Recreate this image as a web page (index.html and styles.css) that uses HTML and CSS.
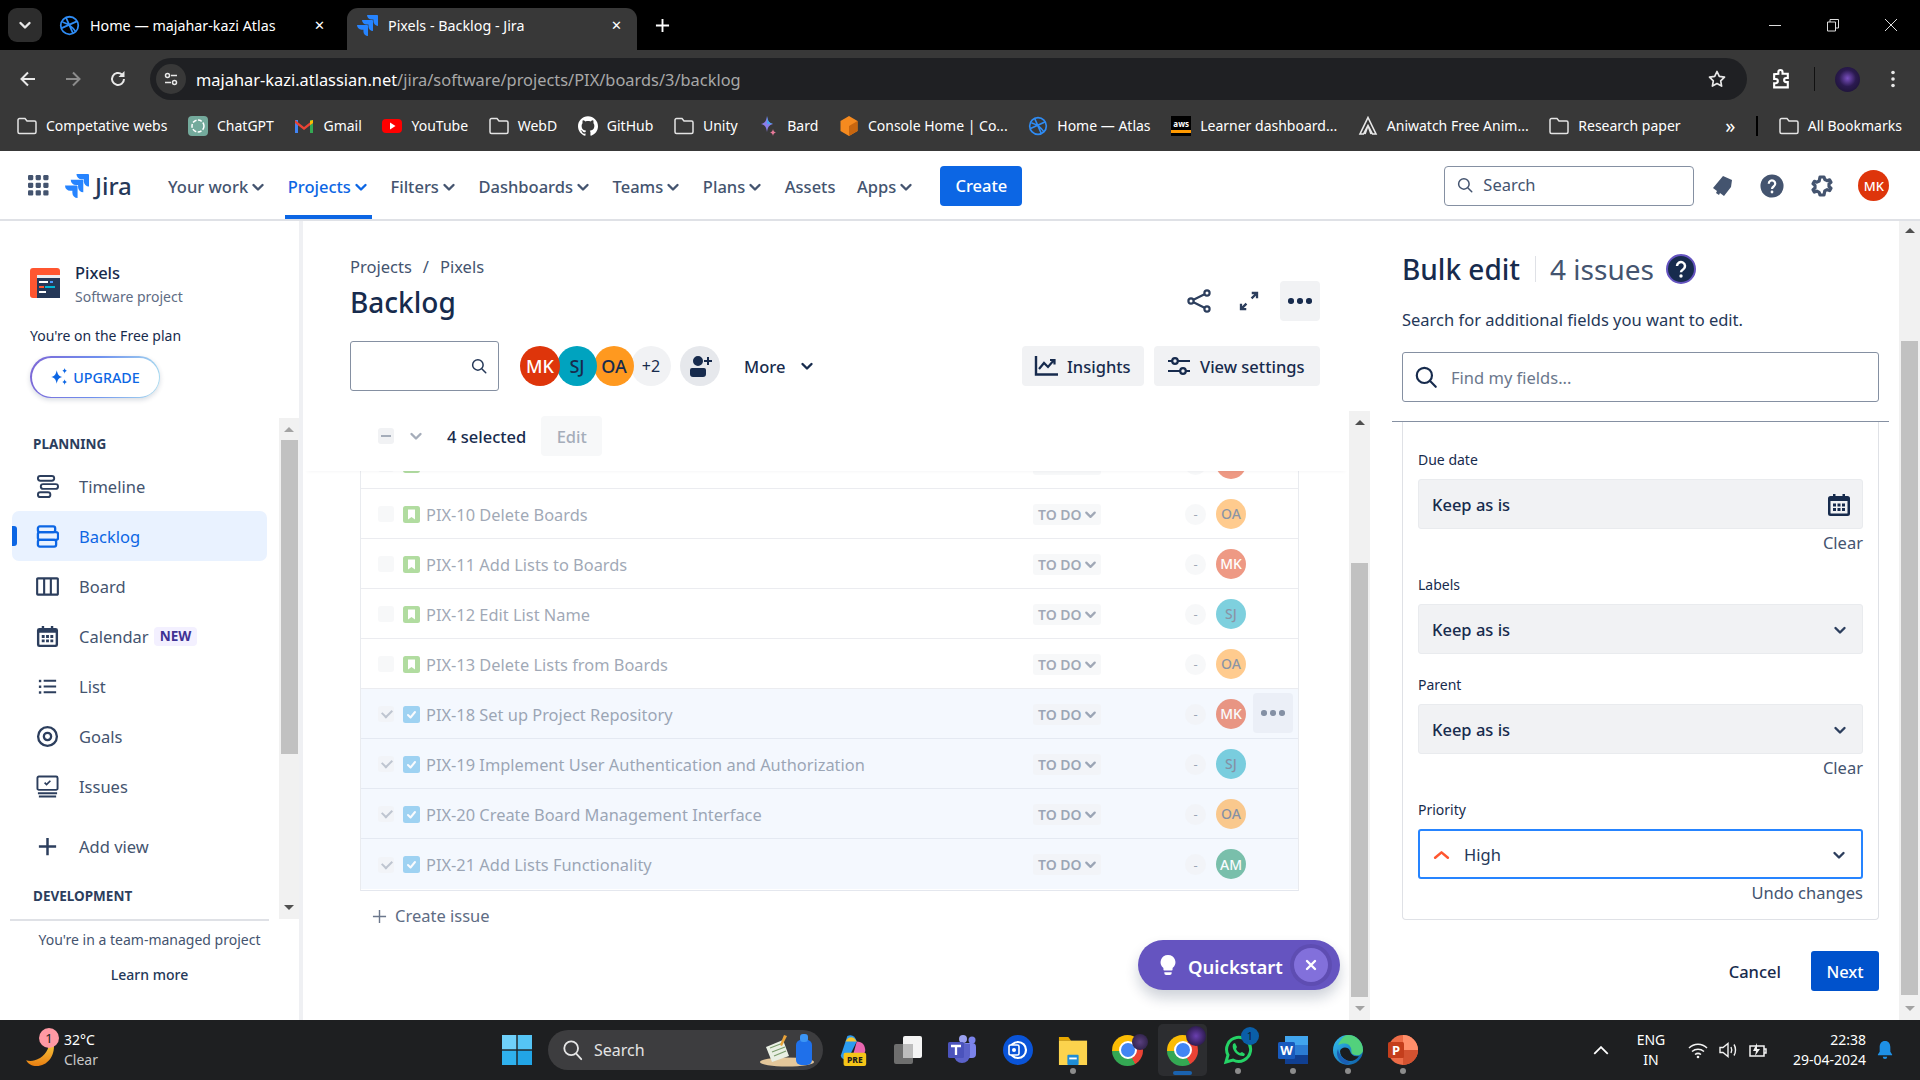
FILE: index.html
```html
<!DOCTYPE html>
<html lang="en">
<head>
<meta charset="utf-8">
<title>Pixels - Backlog - Jira</title>
<link rel="stylesheet" href="styles.css">
</head>
<body>
<svg class="defs" aria-hidden="true">
  <symbol id="jira" viewBox="0 0 24 24"><path fill="#2684ff" d="M11.571 11.513H0a5.218 5.218 0 0 0 5.232 5.215h2.13v2.057A5.215 5.215 0 0 0 12.575 24V12.518a1.005 1.005 0 0 0-1.005-1.005zm5.723-5.756H5.736a5.215 5.215 0 0 0 5.215 5.214h2.129v2.058a5.218 5.218 0 0 0 5.215 5.214V6.758a1.001 1.001 0 0 0-1.001-1.001zM23.013 0H11.455a5.215 5.215 0 0 0 5.215 5.215h2.129v2.057A5.215 5.215 0 0 0 24 12.483V1.005A1.001 1.001 0 0 0 23.013 0z"/></symbol>
  <symbol id="atlas" viewBox="0 0 24 24"><g fill="none" stroke="#2f8cf4" stroke-width="2"><circle cx="12" cy="12" r="10"/><path d="M3 15 21 7M8 3l8 18M4 8c6 2 12 6 15 11"/></g></symbol>
  <symbol id="folder" viewBox="0 0 20 18"><path fill="none" stroke="#e4e4e4" stroke-width="1.5" d="M2.5 1.5H8l2 2.5h7.5a1.5 1.5 0 0 1 1.5 1.5v9.5a1.5 1.5 0 0 1-1.5 1.5h-15A1.5 1.5 0 0 1 1 15V3a1.5 1.5 0 0 1 1.5-1.5z"/></symbol>
  <symbol id="chev" viewBox="0 0 16 16"><path fill="none" stroke="currentColor" stroke-width="2.4" stroke-linecap="round" stroke-linejoin="round" d="M3.5 6 8 10.5 12.5 6"/></symbol>
  <symbol id="search" viewBox="0 0 24 24"><path fill="none" stroke="currentColor" stroke-width="2" stroke-linecap="round" d="M10.5 3.5a7 7 0 1 1 0 14 7 7 0 0 1 0-14zM16 16l5 5"/></symbol>
  <symbol id="cal" viewBox="0 0 24 24"><path fill="currentColor" fill-rule="evenodd" d="M3.5 3H6V1h2.500v2h7V1H18v2h2.500A2.500 2.500 0 0 1 23 5.500v15a2.500 2.500 0 0 1-2.500 2.500h-17A2.500 2.500 0 0 1 1 20.500v-15A2.500 2.500 0 0 1 3.500 3zM3.500 8v12a.5.5 0 0 0 .5.5h16a.5.5 0 0 0 .5-.5V8zM6 10.500h3v3H6zm4.500 0h3v3h-3zm4.500 0h3v3h-3zM6 15h3v3H6zm4.500 0h3v3h-3zm4.500 0h3v3h-3z"/></symbol>
  <symbol id="story" viewBox="0 0 17 17"><rect width="17" height="17" rx="2.500" fill="#65ba43"/><path fill="#fff" d="M5 3.500h7v10L8.500 11 5 13.500z"/></symbol>
  <symbol id="task" viewBox="0 0 17 17"><rect width="17" height="17" rx="2.500" fill="#4bade8"/><path fill="none" stroke="#fff" stroke-width="2" stroke-linecap="round" stroke-linejoin="round" d="m5 9 2.500 2.500L12 6"/></symbol>
  <symbol id="tbfolder" viewBox="0 0 32 34"><path fill="#e8a800" d="M1 3h10l3 4H1z"/><rect x="1" y="7" width="30" height="26" fill="#fcd34d"/><rect x="10" y="22" width="12" height="11" rx="1" fill="#1f8dd6"/><rect x="12" y="25" width="8" height="2" fill="#fff"/></symbol>
</svg>

<div class="tabstrip">
  <span class="tab-menu"><svg class="i16"><use href="#chev"/></svg></span>
  <div class="tab">
    <svg class="fav"><use href="#atlas"/></svg>
    <span class="tab-title">Home — majahar-kazi Atlas</span>
    <span class="tab-x">✕</span>
  </div>
  <div class="tab tab-on">
    <svg class="fav"><use href="#jira"/></svg>
    <span class="tab-title">Pixels - Backlog - Jira</span>
    <span class="tab-x">✕</span>
  </div>
  <svg class="tab-plus" viewBox="0 0 16 16"><path stroke="#fff" stroke-width="2" d="M8 1v14M1 8h14"/></svg>
  <div class="winbtns">
    <svg viewBox="0 0 14 14"><path stroke="#ddd" d="M1 7.500h12"/></svg>
    <svg viewBox="0 0 14 14"><path fill="none" stroke="#ddd" d="M1.500 4h8v9h-8zM4 4V1.500h8.500V10H9.500"/></svg>
    <svg viewBox="0 0 14 14"><path stroke="#ddd" d="m1 1 12 12M13 1 1 13"/></svg>
  </div>
</div>

<div class="toolbar">
  <svg class="tb-btn" viewBox="0 0 20 20"><path fill="none" stroke="#e8e8e8" stroke-width="2" d="M17 10H4m6-6.500L3.500 10l6.500 6.500"/></svg>
  <svg class="tb-btn" viewBox="0 0 20 20"><path fill="none" stroke="#8c8c8c" stroke-width="2" d="M3 10h13M10 3.500l6.500 6.500-6.500 6.500"/></svg>
  <svg class="tb-btn" viewBox="0 0 20 20"><path fill="none" stroke="#e8e8e8" stroke-width="2" d="M16 10a6 6 0 1 1-2-4.500"/><path fill="#e8e8e8" d="M16.500 2v6h-6z"/></svg>
  <div class="omni">
    <span class="tune"><svg viewBox="0 0 16 16"><g fill="none" stroke="#e8e8e8" stroke-width="1.500"><circle cx="4.500" cy="4.500" r="2"/><circle cx="11.500" cy="11.500" r="2"/><path d="M8 4.500h6M2 11.500h6"/></g></svg></span>
    <span class="url"><b>majahar-kazi.atlassian.net</b>/jira/software/projects/PIX/boards/3/backlog</span>
    <svg class="star" viewBox="0 0 20 20"><path fill="none" stroke="#e8e8e8" stroke-width="1.700" stroke-linejoin="round" d="m10 2.500 2.300 4.900 5.200.7-3.800 3.700.9 5.300-4.600-2.600-4.600 2.600.9-5.300L2.500 8.100l5.200-.7z"/></svg>
  </div>
  <svg class="ext" viewBox="0 0 20 20"><path fill="none" stroke="#fff" stroke-width="2" d="M7 4.500V3a2 2 0 0 1 4 0v1.500h5v4h-1.500a2 2 0 0 0 0 4H16v5H3v-4h1.500a2 2 0 0 0 0-4H3v-4.500z"/></svg>
  <span class="tb-sep"></span>
  <span class="profile"></span>
  <svg class="dots" viewBox="0 0 6 20"><g fill="#e8e8e8"><circle cx="3" cy="3.500" r="1.800"/><circle cx="3" cy="10" r="1.800"/><circle cx="3" cy="16.500" r="1.800"/></g></svg>
</div>

<div class="bookmarks">
  <span class="bm"><svg class="bm-i"><use href="#folder"/></svg>Competative webs</span>
  <span class="bm"><svg class="bm-i" viewBox="0 0 20 20"><rect width="20" height="20" rx="4" fill="#74aa9c"/><circle cx="10" cy="10" r="6" fill="none" stroke="#fff" stroke-width="1.500" stroke-dasharray="4 1.500"/></svg>ChatGPT</span>
  <span class="bm"><svg class="bm-i" viewBox="0 0 20 20"><path fill="#4285f4" d="M1 4h3v13H1z"/><path fill="#34a853" d="M16 4h3v13h-3z"/><path fill="#ea4335" d="M1 4l9 7 9-7v3l-9 7-9-7z"/><path fill="#fbbc04" d="M16 5l3-1v3l-3 2z"/></svg>Gmail</span>
  <span class="bm"><svg class="bm-i" viewBox="0 0 20 20"><rect y="3" width="20" height="14" rx="4" fill="#f00"/><path fill="#fff" d="m8 6.500 5.500 3.500L8 13.500z"/></svg>YouTube</span>
  <span class="bm"><svg class="bm-i"><use href="#folder"/></svg>WebD</span>
  <span class="bm"><svg class="bm-i" viewBox="0 0 24 24"><path fill="#fff" d="M12 .297c-6.630 0-12 5.373-12 12 0 5.303 3.438 9.800 8.205 11.385.6.113.82-.258.82-.577 0-.285-.01-1.040-.015-2.040-3.338.724-4.042-1.610-4.042-1.610C4.422 18.070 3.633 17.700 3.633 17.700c-1.087-.744.084-.729.084-.729 1.205.084 1.838 1.236 1.838 1.236 1.070 1.835 2.809 1.305 3.495.998.108-.776.417-1.305.760-1.605-2.665-.3-5.466-1.332-5.466-5.930 0-1.310.465-2.380 1.235-3.220-.135-.303-.54-1.523.105-3.176 0 0 1.005-.322 3.300 1.230.96-.267 1.980-.399 3-.405 1.020.006 2.040.138 3 .405 2.280-1.552 3.285-1.230 3.285-1.230.645 1.653.24 2.873.12 3.176.765.840 1.230 1.910 1.230 3.220 0 4.610-2.805 5.625-5.475 5.920.42.360.81 1.096.81 2.220 0 1.606-.015 2.896-.015 3.286 0 .315.21.69.825.57C20.565 22.092 24 17.592 24 12.297c0-6.627-5.373-12-12-12"/></svg>GitHub</span>
  <span class="bm"><svg class="bm-i"><use href="#folder"/></svg>Unity</span>
  <span class="bm"><svg class="bm-i" viewBox="0 0 20 20"><path fill="#8a7ee8" d="M9 0c.8 5 2 7 6 8-4 1-5.200 3-6 8-.8-5-2-7-6-8 4-1 5.200-3 6-8z"/><path fill="#4aa3f0" d="M9 0c.8 5 2 7 6 8H9z"/><path fill="#e87a9a" d="M15 13c.3 2 1 3 3 3.500-2 .5-2.700 1.500-3 3.500-.3-2-1-3-3-3.500 2-.5 2.700-1.500 3-3.500z"/></svg>Bard</span>
  <span class="bm"><svg class="bm-i" viewBox="0 0 20 20"><path fill="#f58a1f" d="m10 0 8.500 5v10L10 20l-8.500-5V5z"/><path fill="#c8660f" d="M10 10v10l8.500-5V5z"/></svg>Console Home | Co...</span>
  <span class="bm"><svg class="bm-i"><use href="#atlas"/></svg>Home — Atlas</span>
  <span class="bm"><span class="aws">aws</span>Learner dashboard...</span>
  <span class="bm"><svg class="bm-i" viewBox="0 0 20 20"><path fill="none" stroke="#e8e8e8" stroke-width="1.600" d="M10 1.500 18 18h-3.500L10 9.500 5.500 18H2zM10 9.500 7 18M10 9.500l3 8.500"/></svg>Aniwatch Free Anim...</span>
  <span class="bm"><svg class="bm-i"><use href="#folder"/></svg>Research paper</span>
  <span class="bm-more">»</span>
  <span class="bm-sep"></span>
  <span class="bm"><svg class="bm-i"><use href="#folder"/></svg>All Bookmarks</span>
</div>

<header class="topnav">
  <svg class="apps" viewBox="0 0 22 22"><g fill="#44546f"><rect x="0" y="0" width="5.500" height="5.500" rx="1.200"/><rect x="8" y="0" width="5.500" height="5.500" rx="1.200"/><rect x="16" y="0" width="5.500" height="5.500" rx="1.200"/><rect x="0" y="8" width="5.500" height="5.500" rx="1.200"/><rect x="8" y="8" width="5.500" height="5.500" rx="1.200"/><rect x="16" y="8" width="5.500" height="5.500" rx="1.200"/><rect x="0" y="16" width="5.500" height="5.500" rx="1.200"/><rect x="8" y="16" width="5.500" height="5.500" rx="1.200"/><rect x="16" y="16" width="5.500" height="5.500" rx="1.200"/></g></svg>
  <svg class="jira-mark"><use href="#jira"/></svg>
  <span class="jira-word">Jira</span>
  <nav class="mainnav">
    <a class="nav-i">Your work<svg class="nav-c"><use href="#chev"/></svg></a>
    <a class="nav-i nav-on">Projects<svg class="nav-c"><use href="#chev"/></svg></a>
    <a class="nav-i">Filters<svg class="nav-c"><use href="#chev"/></svg></a>
    <a class="nav-i">Dashboards<svg class="nav-c"><use href="#chev"/></svg></a>
    <a class="nav-i">Teams<svg class="nav-c"><use href="#chev"/></svg></a>
    <a class="nav-i">Plans<svg class="nav-c"><use href="#chev"/></svg></a>
    <a class="nav-i">Assets</a>
    <a class="nav-i">Apps<svg class="nav-c"><use href="#chev"/></svg></a>
  </nav>
  <button class="create">Create</button>
  <div class="nav-search"><svg class="i18"><use href="#search"/></svg><span>Search</span></div>
  <svg class="nav-ic bell" viewBox="0 0 24 24"><path fill="#44546f" d="M13 2 22 6l-1 7-7 9-4-3-1 2-3-2 1-2-4-3z"/></svg>
  <svg class="nav-ic help" viewBox="0 0 26 26"><circle cx="13" cy="13" r="12.500" fill="#44546f"/><path fill="none" stroke="#fff" stroke-width="2.400" d="M9.500 10.500a3.500 3.500 0 1 1 5.500 2.800c-1.200.8-2 1.500-2 3"/><circle cx="13" cy="19.500" r="1.500" fill="#fff"/></svg>
  <svg class="nav-ic gear" viewBox="0 0 24 24"><path fill="none" stroke="#44546f" stroke-width="3.200" stroke-linejoin="round" d="M12 3l2 0 .8 2.500 2.300 1.200 2.500-.9 1.400 2.400-2 1.700v2.600l2 1.700-1.400 2.400-2.500-.9-2.300 1.200L14 21h-4l-.8-2.600-2.300-1.200-2.500.9-1.400-2.400 2-1.700v-2.600l-2-1.700 1.400-2.400 2.500.9 2.300-1.200L10 3z"/></svg>
  <span class="ava ava-nav">MK</span>
</header>

<div class="page">
  <aside class="side">
    <div class="proj">
      <svg class="proj-ic" viewBox="0 0 30 30"><rect width="30" height="30" rx="3" fill="#ff5630"/><rect x="7" y="7" width="23" height="23" fill="#253858"/><rect x="7" y="7" width="23" height="3" fill="#ebecf0"/><rect x="9" y="13" width="9" height="2" fill="#fff"/><rect x="20" y="13" width="3" height="2" fill="#4c9aff"/><rect x="9" y="18" width="5" height="2" fill="#ff5630"/><rect x="15" y="18" width="10" height="2" fill="#00b8d9"/><rect x="9" y="23" width="7" height="2" fill="#fff"/></svg>
      <div class="proj-t"><strong>Pixels</strong><span>Software project</span></div>
    </div>
    <p class="plan">You're on the Free plan</p>
    <div class="upg-wrap"><span class="upgrade"><svg viewBox="0 0 16 16"><path fill="#0c66e4" d="M6 2c.8 4 2 5.200 5 6-3 .8-4.200 2-5 6-.8-4-2-5.200-5-6 3-.8 4.200-2 5-6zM13 0c.3 1.500.8 2 2 2.500-1.200.5-1.700 1-2 2.500-.3-1.500-.8-2-2-2.500 1.200-.5 1.700-1 2-2.500zM13 10c.3 1.500.8 2 2 2.500-1.200.5-1.700 1-2 2.500-.3-1.500-.8-2-2-2.500 1.200-.5 1.700-1 2-2.500z"/></svg>UPGRADE</span></div>
    <div class="side-scroll">
      <div class="side-nav">
        <h4>PLANNING</h4>
        <a class="sn"><svg viewBox="0 0 24 24"><g fill="none" stroke="#2c3e5d" stroke-width="2"><rect x="2" y="1" width="17" height="5" rx="2.500"/><rect x="5" y="9.500" width="18" height="5" rx="2.500"/><rect x="2" y="18" width="13" height="5" rx="2.500"/></g></svg>Timeline</a>
        <a class="sn sn-on"><svg viewBox="0 0 24 24"><g fill="none" stroke="#0c66e4" stroke-width="2.400"><rect x="2" y="1.500" width="18" height="6" rx="2"/><rect x="2" y="7.500" width="21" height="8" rx="2"/><rect x="2" y="15.500" width="19" height="7" rx="2"/></g></svg>Backlog</a>
        <a class="sn"><svg viewBox="0 0 24 24"><path fill="none" stroke="#2c3e5d" stroke-width="2.200" d="M2 3.500h20a.8.8 0 0 1 .8.8v15.400a.8.8 0 0 1-.8.8H2a.8.8 0 0 1-.8-.8V4.300a.8.800 0 0 1 .8-.8zM8.500 3.500v17M15.500 3.500v17"/></svg>Board</a>
        <a class="sn"><svg class="sn-cal"><use href="#cal"/></svg>Calendar<em>NEW</em></a>
        <a class="sn"><svg viewBox="0 0 24 24"><path fill="none" stroke="#2c3e5d" stroke-width="2.200" d="M8 6h13M8 12h13M8 18h13"/><g fill="#2c3e5d"><rect x="3" y="5" width="2.500" height="2.500"/><rect x="3" y="11" width="2.500" height="2.500"/><rect x="3" y="17" width="2.500" height="2.500"/></g></svg>List</a>
        <a class="sn"><svg viewBox="0 0 24 24"><g fill="none" stroke="#2c3e5d" stroke-width="2.400"><circle cx="12" cy="12" r="9.800"/><circle cx="12" cy="12" r="3.800"/></g></svg>Goals</a>
        <a class="sn"><svg viewBox="0 0 24 24"><path fill="none" stroke="#2c3e5d" stroke-width="2" d="M3 1.500h18a1.500 1.500 0 0 1 1.500 1.500v11a1.500 1.500 0 0 1-1.500 1.500H3A1.500 1.500 0 0 1 1.500 14V3A1.500 1.500 0 0 1 3 1.500zM2 19h20M3 22.500h18"/><path fill="none" stroke="#2c3e5d" stroke-width="1.800" d="m9 8 2 2 4-4"/></svg>Issues</a>
        <a class="sn sn-add"><svg viewBox="0 0 24 24"><path stroke="#2c3e5d" stroke-width="2.600" d="M12 3v18M3 12h18"/></svg>Add view</a>
        <h4 class="h-dev">DEVELOPMENT</h4>
      </div>
      <div class="sb sb-side"><i class="ar-up"></i><b></b><i class="ar-dn"></i></div>
    </div>
    <div class="side-foot"><span>You're in a team-managed project</span><a>Learn more</a></div>
  </aside>

  <main class="main">
    <div class="main-head">
      <div class="crumbs"><span>Projects</span><span class="slash">/</span><span>Pixels</span></div>
      <div class="title-row">
        <h1>Backlog</h1>
        <div class="title-acts">
          <svg class="act" viewBox="0 0 24 24"><g fill="none" stroke="#2c3e5d" stroke-width="2.200"><circle cx="4" cy="12" r="2.600"/><circle cx="20" cy="4" r="2.600"/><circle cx="20" cy="20" r="2.600"/><path d="M6.500 10.800 17.500 5.200M6.500 13.200l11 5.600"/></g></svg>
          <svg class="act act2" viewBox="0 0 24 24"><path fill="#2c3e5d" d="M15 2h7v7h-2.500V6.300l-3.800 3.800-1.800-1.800 3.800-3.800H15zM9 22H2v-7h2.500v2.700l3.800-3.800 1.800 1.800-3.800 3.800H9z"/></svg>
          <span class="more-btn"><i></i><i></i><i></i></span>
        </div>
      </div>
      <div class="filters">
        <div class="fsearch"><svg class="i18"><use href="#search"/></svg></div>
        <div class="avs">
          <span class="ava a40 c-mk">MK</span><span class="ava a40 c-sj">SJ</span><span class="ava a40 c-oa">OA</span><span class="ava a40 c-plus">+2</span>
        </div>
        <span class="addp"><svg viewBox="0 0 24 24"><path fill="#172b4d" d="M10 2a5 5 0 1 1 0 10 5 5 0 0 1 0-10zM4 14h12a2 2 0 0 1 2 2v4a3 3 0 0 1-3 3H5a3 3 0 0 1-3-3v-4a2 2 0 0 1 2-2zM19 3h2v3h3v2h-3v3h-2V8h-3V6h3z"/></svg></span>
        <span class="morefl">More<svg><use href="#chev"/></svg></span>
        <span class="btn btn-ins"><svg viewBox="0 0 24 24"><path fill="none" stroke="#172b4d" stroke-width="2.400" d="M2 2v18.500h22"/><path fill="none" stroke="#172b4d" stroke-width="2.200" d="m5 15 5-6 4 4 6-7m-4 0h4.500v4.500"/></svg>Insights</span>
        <span class="btn btn-view"><svg viewBox="0 0 24 24"><g fill="none" stroke="#172b4d" stroke-width="2.200"><path d="M1 7h4M11 7h12M1 17h12M19 17h4"/><circle cx="8" cy="7" r="2.800"/><circle cx="16" cy="17" r="2.800"/></g></svg>View settings</span>
      </div>
    </div>
    <div class="main-body">
      <div class="list-col">
        <div class="bulkbar">
          <span class="bulk-cb"></span>
          <svg class="bulk-c"><use href="#chev"/></svg>
          <strong>4 selected</strong>
          <span class="edit">Edit</span>
        </div>
        <div class="list">
          <div class="row row-cut"><div class="cells"><span class="cb"></span><svg class="ti"><use href="#story"/></svg><span class="txt"></span><span class="loz"></span><span class="dash"></span><span class="ava a30 c-mk"></span></div></div>
          <div class="row"><div class="cells"><span class="cb"></span><svg class="ti"><use href="#story"/></svg><span class="txt">PIX-10 Delete Boards</span><span class="loz">TO DO<svg><use href="#chev"/></svg></span><span class="dash">-</span><span class="ava a30 c-oa">OA</span></div></div>
          <div class="row"><div class="cells"><span class="cb"></span><svg class="ti"><use href="#story"/></svg><span class="txt">PIX-11 Add Lists to Boards</span><span class="loz">TO DO<svg><use href="#chev"/></svg></span><span class="dash">-</span><span class="ava a30 c-mk">MK</span></div></div>
          <div class="row"><div class="cells"><span class="cb"></span><svg class="ti"><use href="#story"/></svg><span class="txt">PIX-12 Edit List Name</span><span class="loz">TO DO<svg><use href="#chev"/></svg></span><span class="dash">-</span><span class="ava a30 c-sj">SJ</span></div></div>
          <div class="row"><div class="cells"><span class="cb"></span><svg class="ti"><use href="#story"/></svg><span class="txt">PIX-13 Delete Lists from Boards</span><span class="loz">TO DO<svg><use href="#chev"/></svg></span><span class="dash">-</span><span class="ava a30 c-oa">OA</span></div></div>
          <div class="row row-sel"><div class="cells"><span class="cb cb-on"></span><svg class="ti"><use href="#task"/></svg><span class="txt">PIX-18 Set up Project Repository</span><span class="loz">TO DO<svg><use href="#chev"/></svg></span><span class="dash">-</span><span class="ava a30 c-mk">MK</span><span class="row-more"><i></i><i></i><i></i></span></div></div>
          <div class="row row-sel"><div class="cells"><span class="cb cb-on"></span><svg class="ti"><use href="#task"/></svg><span class="txt">PIX-19 Implement User Authentication and Authorization</span><span class="loz">TO DO<svg><use href="#chev"/></svg></span><span class="dash">-</span><span class="ava a30 c-sj">SJ</span></div></div>
          <div class="row row-sel"><div class="cells"><span class="cb cb-on"></span><svg class="ti"><use href="#task"/></svg><span class="txt">PIX-20 Create Board Management Interface</span><span class="loz">TO DO<svg><use href="#chev"/></svg></span><span class="dash">-</span><span class="ava a30 c-oa">OA</span></div></div>
          <div class="row row-sel"><div class="cells"><span class="cb cb-on"></span><svg class="ti"><use href="#task"/></svg><span class="txt">PIX-21 Add Lists Functionality</span><span class="loz">TO DO<svg><use href="#chev"/></svg></span><span class="dash">-</span><span class="ava a30 c-am">AM</span></div></div>
        </div>
        <div class="create-issue"><svg viewBox="0 0 16 16"><path stroke="#6b778c" stroke-width="1.500" d="M8 1v14M1 8h14"/></svg>Create issue</div>
        <div class="quick">
          <svg viewBox="0 0 18 24"><path fill="#fff" d="M9 1a8 8 0 0 1 5 14.300V17a1 1 0 0 1-1 1H5a1 1 0 0 1-1-1v-1.700A8 8 0 0 1 9 1zM5 20h8v1a2 2 0 0 1-2 2H7a2 2 0 0 1-2-2z"/></svg>
          <span>Quickstart</span>
          <span class="q-x"><svg viewBox="0 0 12 12"><path stroke="#fff" stroke-width="2.400" stroke-linecap="round" d="m2 2 8 8M10 2l-8 8"/></svg></span>
        </div>
      </div>
      <div class="sb sb-main"><i class="ar-up"></i><b></b><i class="ar-dn"></i></div>
    </div>
  </main>

  <section class="panel">
    <div class="p-head">
      <h2>Bulk edit</h2><span class="p-div"></span><span class="p-count">4 issues</span>
      <svg class="p-help" viewBox="0 0 30 30"><circle cx="15" cy="15" r="14" fill="#172b4d" stroke="#6554c0" stroke-width="2"/><path fill="none" stroke="#fff" stroke-width="2.500" d="M11 12a4 4 0 1 1 6.300 3.300c-1.500 1-2.300 1.700-2.300 3"/><circle cx="15" cy="22" r="1.700" fill="#fff"/></svg>
    </div>
    <p class="p-desc">Search for additional fields you want to edit.</p>
    <div class="find"><svg><use href="#search"/></svg><span>Find my fields...</span></div>
    <div class="p-line"></div>
    <div class="fields">
      <div class="f-clip"><span>Clear</span></div>
      <label class="f-lab f-first">Due date</label>
      <div class="inp"><span>Keep as is</span><svg class="inp-cal"><use href="#cal"/></svg></div>
      <a class="f-link">Clear</a>
      <label class="f-lab f-b">Labels</label>
      <div class="inp"><span>Keep as is</span><svg class="inp-c"><use href="#chev"/></svg></div>
      <label class="f-lab f-c">Parent</label>
      <div class="inp"><span>Keep as is</span><svg class="inp-c"><use href="#chev"/></svg></div>
      <a class="f-link">Clear</a>
      <label class="f-lab f-b">Priority</label>
      <div class="inp inp-focus"><svg class="prio" viewBox="0 0 16 10"><path fill="none" stroke="#ff5630" stroke-width="2.400" stroke-linecap="round" stroke-linejoin="round" d="M2 8 8 3l6 5"/></svg><span>High</span><svg class="inp-c"><use href="#chev"/></svg></div>
      <a class="f-link">Undo changes</a>
    </div>
    <div class="p-acts"><span class="cancel">Cancel</span><span class="next">Next</span></div>
  </section>
  <div class="sb sb-outer"><i class="ar-up"></i><b></b><i class="ar-dn"></i></div>
</div>

<footer class="taskbar">
  <div class="weather">
    <span class="w-ic"><svg class="w-moon" viewBox="0 0 30 24"><defs><linearGradient id="moon" x1="0" y1="0" x2="0" y2="1"><stop offset="0" stop-color="#f7c63c"/><stop offset="1" stop-color="#e97f12"/></linearGradient></defs><path fill="url(#moon)" d="M29 0c1 13-7 23-18 23-5 0-9-2-11-6 3 1 6 1 9 0 8-2 14-9 15-17z"/></svg><span class="w-badge">1</span></span>
    <div class="w-t"><span>32°C</span><span class="w-s">Clear</span></div>
  </div>
  <svg class="win" viewBox="0 0 30 30"><g fill="#4fc3f7"><rect width="14.300" height="14.300" fill="#6fd0fa"/><rect x="15.700" width="14.300" height="14.300" fill="#55c4f5"/><rect y="15.700" width="14.300" height="14.300" fill="#2fb1ee"/><rect x="15.700" y="15.700" width="14.300" height="14.300" fill="#22a5e6"/></g></svg>
  <div class="t-search">
    <svg viewBox="0 0 24 24"><path fill="none" stroke="#e6e6e6" stroke-width="2" stroke-linecap="round" d="M10 2.500a7.500 7.500 0 1 1 0 15 7.500 7.500 0 0 1 0-15zM15.500 16 21 22"/></svg>
    <span>Search</span>
    <svg class="t-art" viewBox="0 0 56 34"><ellipse cx="27" cy="29" rx="27" ry="4.500" fill="#e4c79a"/><path fill="#e9efe3" d="m6 14 17-7 6 16-17 6z"/><path stroke="#7b9c6d" stroke-width="1.200" d="m10 15 13-5M12 19l13-5M14 23l12-5"/><path fill="#e8a23a" d="m24 2 3 1-5 10-2-1z"/><rect x="36" y="7" width="16" height="25" rx="5" fill="#1f70ea"/><rect x="40" y="1" width="8" height="8" rx="3" fill="#3b95f5"/></svg>
  </div>
  <div class="apps-t">
    <span class="slot"><svg viewBox="0 0 30 34"><path fill="#2c9bf0" d="M9 2c5-2 8 0 10 6l-9 18c-3 2-7 1-8-3z"/><path fill="#e965b0" d="M19 8c6 0 9 4 9 10l-3 8H14z"/><path fill="#f4c430" d="M7 8c3-6 9-6 12 0H9z"/><rect x="5" y="20" width="24" height="14" rx="2" fill="#f5c518"/><text class="pre" x="17" y="31" text-anchor="middle">PRE</text></svg></span>
    <span class="slot"><svg viewBox="0 0 30 30"><rect x="10" y="1" width="19" height="22" rx="2" fill="#f4f4f4"/><rect x="1" y="9" width="19" height="20" rx="2" fill="#6e6e6e"/><rect x="10" y="9" width="10" height="14" fill="#bdbdbd"/></svg></span>
    <span class="slot"><svg viewBox="0 0 30 30"><rect x="14" y="8" width="14" height="15" rx="4" fill="#7b83eb"/><circle cx="24" cy="5" r="3.500" fill="#7b83eb"/><circle cx="15" cy="4" r="4" fill="#9aa0f0"/><path fill="#5b62c9" d="M6 9h16v11a8 8 0 0 1-16 0z"/><rect x="0" y="7" width="16" height="16" rx="1.500" fill="#4b53bc"/><path stroke="#fff" stroke-width="2.300" d="M3 11h10M8 11v9"/></svg></span>
    <span class="slot"><svg viewBox="0 0 30 30"><circle cx="15" cy="15" r="15" fill="#0a54d8"/><circle cx="15" cy="15" r="8" fill="none" stroke="#fff" stroke-width="2.200"/><rect x="6" y="10" width="10" height="10" rx="1.500" fill="#0a54d8" stroke="#fff" stroke-width="1.600"/><circle cx="11" cy="15" r="2" fill="#fff"/></svg></span>
    <span class="slot"><svg viewBox="0 0 32 34"><use href="#tbfolder"/></svg><i class="t-dot"></i></span>
    <span class="slot"><span class="chrome"><span class="chrome-c"></span></span><span class="t-pf"></span></span>
    <span class="slot slot-on"><span class="chrome"><span class="chrome-c"></span></span><span class="t-pf t-pf2"></span><i class="t-active"></i></span>
    <span class="slot"><svg viewBox="0 0 30 30"><path fill="none" stroke="#25d366" stroke-width="3" d="M3 27l2-7A12 12 0 1 1 10 25z"/><path fill="#25d366" d="M10 9l2-1 2 4-1 2c1 2 2 3 4 4l2-1 3 2-1 2c-6 1-13-6-11-12z"/></svg><span class="t-badge">1</span><i class="t-dot"></i></span>
    <span class="slot"><svg viewBox="0 0 30 30"><rect x="7" y="1" width="23" height="28" rx="2" fill="#2b7cd3"/><rect x="7" y="1" width="23" height="9" fill="#41a5ee"/><rect x="7" y="20" width="23" height="9" fill="#103f91"/><rect x="0" y="7" width="17" height="17" rx="1.500" fill="#185abd"/><text class="lt" x="8.500" y="20" text-anchor="middle">W</text></svg><i class="t-dot"></i></span>
    <span class="slot"><svg viewBox="0 0 30 30"><defs><linearGradient id="edg" x1="0" y1="0" x2="1" y2="1"><stop offset="0" stop-color="#35c1f1"/><stop offset="1" stop-color="#0c59a4"/></linearGradient></defs><circle cx="15" cy="15" r="15" fill="url(#edg)"/><path fill="#52d17c" d="M15 0a15 15 0 0 1 15 15c0 4-4 6-8 5-5-1-3-4-4-7-2-6-9-5-13-3C8 4 11 0 15 0z"/><path fill="#1a1d20" d="M7 16c1-4 8-5 10 0 1 4 4 6 9 5-3 5-9 6-13 4-4-2-6-5-6-9z"/><path fill="#1a5fb4" d="M12 29c-6-2-10-9-7-15 1 6 5 10 12 13-1 2-3 3-5 2z"/></svg><i class="t-dot"></i></span>
    <span class="slot"><svg viewBox="0 0 30 30"><circle cx="15" cy="15" r="15" fill="#ed6c47"/><path fill="#ff8f6b" d="M15 0a15 15 0 0 1 15 15H15z"/><path fill="#d35230" d="M15 15h15a15 15 0 0 1-15 15z"/><rect x="0" y="7" width="16" height="16" rx="1.500" fill="#c43e1c"/><text class="lt" x="8" y="20" text-anchor="middle">P</text></svg><i class="t-dot"></i></span>
  </div>
  <div class="tray">
    <svg class="tr-ch" viewBox="0 0 14 8"><path fill="none" stroke="#fff" stroke-width="1.600" d="m1 7 6-6 6 6"/></svg>
    <div class="tr-lang"><span>ENG</span><span>IN</span></div>
    <svg class="tr-i tr-w" viewBox="0 0 20 20"><g fill="none" stroke="#f2f2f2" stroke-width="1.500"><path d="M1 8c5-5 13-5 18 0M4 11.500c3.500-3 8.500-3 12 0M7 14.500c2-1.500 4-1.500 6 0"/></g><circle cx="10" cy="17" r="1.300" fill="#f2f2f2"/></svg>
    <svg class="tr-i" viewBox="0 0 20 20"><path fill="none" stroke="#f2f2f2" stroke-width="1.400" d="M2 7.500h3l5-4v13l-5-4H2zM13 7c1 2 1 4 0 6M16 4.500c2 3 2 8 0 11"/></svg>
    <svg class="tr-i" viewBox="0 0 20 20"><path fill="none" stroke="#f2f2f2" stroke-width="1.500" d="M2 6h14v10H2zM16 9h2v4h-2z"/><path fill="#f2f2f2" d="M9 3 5 11h3l-1 5 5-7H9z"/></svg>
    <div class="tr-time"><span>22:38</span><span>29-04-2024</span></div>
    <svg class="tr-bell" viewBox="0 0 18 22"><path fill="#1e90e6" d="M9 1c4 0 6 3 6 7v5l2 3v1H1v-1l2-3V8c0-4 2-7 6-7zM6.500 18.500h5a2.500 2.500 0 0 1-5 0z"/></svg>
  </div>
</footer>
</body>
</html>
```
FILE: styles.css
```css
* { box-sizing: border-box; }
html, body { margin: 0; padding: 0; }
body {
  width: 1920px; height: 1080px; overflow: hidden;
  font-family: "Noto Sans", "Open Sans", sans-serif;
  color: #172b4d; background: #fff;
  display: flex; flex-direction: column;
}
.defs { width: 0; height: 0; position: absolute; }
h1, h2, h4, p { margin: 0; font-weight: inherit; }
svg { display: block; flex: none; }

/* tab strip */
.tabstrip { height: 50px; background: #000; display: flex; align-items: flex-end; color: #fff; font-size: 14.300px; }
.tab-menu { width: 34px; height: 34px; margin: 0 0 8px 8px; border-radius: 9px; background: #2d2d2d; display: flex; align-items: center; justify-content: center; color: #e8e8e8; }
.i16 { width: 16px; height: 16px; }
.tab { width: 305px; height: 42px; padding: 0 0 8px 17px; display: flex; align-items: center; margin-bottom: 0; }
.tab-on { width: 290px; background: #383838; border-radius: 11px 11px 0 0; padding-left: 10px; margin-left: 0; }
.fav { width: 21px; height: 21px; margin-right: 10px; }
.tab-title { flex: 1; white-space: nowrap; }
.tab-x { width: 33px; font-size: 13px; }
.tab-on .tab-x { width: 26px; }
.tab-plus { width: 15px; height: 15px; margin: 0 0 17px 18px; }
.winbtns { margin-left: auto; display: flex; gap: 44px; padding: 0 22px 18px 0; }
.winbtns svg { width: 14px; height: 14px; }

/* toolbar */
.toolbar { height: 58px; background: #383838; display: flex; align-items: center; padding: 0 0 0 18px; }
.tb-btn { width: 20px; height: 20px; margin-right: 25px; }
.tb-btn:nth-child(3) { margin-right: 22px; }
.omni { width: 1597px; height: 42px; margin-left: 0; border-radius: 21px; background: #1f2023; display: flex; align-items: center; padding: 0 20px 0 6px; }
.tune { width: 30px; height: 30px; border-radius: 50%; background: #383838; display: flex; align-items: center; justify-content: center; }
.tune svg { width: 16px; height: 16px; }
.url { margin-left: 10px; font-size: 16.400px; color: #a8a8a8; white-space: nowrap; flex: 1; }
.url b { font-weight: 400; color: #fff; }
.star { width: 20px; height: 20px; }
.ext { width: 21px; height: 21px; margin-left: 24px; }
.tb-sep { width: 1px; height: 24px; background: #111; margin-left: 22px; }
.profile { width: 25px; height: 25px; margin-left: 20px; border-radius: 50%; background: radial-gradient(circle at 50% 45%, #7a4fc0 0, #2b1a50 45%, #16102a 100%); }
.dots { width: 6px; height: 20px; margin-left: 30px; }

/* bookmarks */
.bookmarks { height: 43px; background: #383838; display: flex; align-items: center; justify-content: space-between; padding: 0 18px 8px 17px; color: #fff; font-size: 14px; white-space: nowrap; }
.bm { display: flex; align-items: center; gap: 9px; }
.bm-i { width: 20px; height: 20px; }
.aws { width: 20px; height: 20px; background: #000; color: #fff; font-size: 8px; line-height: 16px; text-align: center; font-weight: 700; border-bottom: 3px solid #000; box-shadow: inset 0 -3px 0 #f90; }
.bm-more { font-size: 20px; line-height: 20px; margin-left: 24px; }
.bm-sep { width: 2px; height: 20px; background: #000; }

/* top nav */
.topnav { height: 70px; background: #fff; border-bottom: 2px solid #dfe1e6; display: flex; align-items: center; padding: 1px 0 0 28px; flex: none; }
.apps { width: 21px; height: 21px; }
.jira-mark { width: 24px; height: 24px; margin-left: 16px; }
.jira-word { font-size: 24px; font-weight: 500; margin-left: 6px; color: #253858; width: 36px; }
.mainnav { display: flex; align-self: stretch; margin: 0 0 0 37px; gap: 21.600px; }
.nav-i { display: flex; align-items: center; color: #44546f; font-size: 16.500px; font-weight: 500; white-space: nowrap; height: 67px; padding-top: 2px; }
.nav-c { width: 16px; height: 16px; margin-left: 2px; color: #44546f; }
.nav-on { color: #0c66e4; box-shadow: inset 0 -4px 0 #0c66e4; margin: 0 -3px; padding: 2px 3px 0; }
.nav-on .nav-c { color: #0c66e4; }
.create { margin-left: 26px; width: 82px; height: 40px; border: 0; border-radius: 4px; background: #0c66e4; color: #fff; font: 500 16.500px "Noto Sans", sans-serif; }
.nav-search { margin-left: 422px; width: 250px; height: 40px; border: 1.500px solid #8590a2; border-radius: 4px; display: flex; align-items: center; padding-left: 11px; gap: 9px; color: #44546f; font-size: 16.500px; padding-bottom: 2px; }
.i18 { width: 18px; height: 18px; }
.nav-ic { width: 24px; height: 24px; }
.bell { margin-left: 16px; }
.help { margin-left: 26px; }
.gear { margin-left: 26px; }
.ava { border-radius: 50%; display: inline-flex; align-items: center; justify-content: center; font-weight: 500; color: #fff; flex: none; }
.ava-nav { width: 31px; height: 31px; margin-left: 24px; background: #de350b; font-size: 13px; }

/* page */
.page { flex: 1; display: flex; min-height: 0; }
.side { width: 303px; flex: none; border-right: 4px solid #eff0f3; display: flex; flex-direction: column; }
.proj { display: flex; padding: 43px 0 0 30px; gap: 15px; height: 90px; }
.proj-ic { width: 30px; height: 30px; margin-top: 4px; }
.proj-t { display: flex; flex-direction: column; margin-top: -2px; }
.proj-t strong { font-size: 16.500px; font-weight: 500; line-height: 22px; }
.proj-t span { font-size: 14px; color: #5e6c84; line-height: 24px; margin-top: 1px; }
.plan { font-size: 14px; padding: 14px 0 0 30px; line-height: 22px; }
.upg-wrap { margin: 9px 0 0 30px; height: 42px; width: 130px; border-radius: 21px; padding: 1.500px; background: linear-gradient(100deg, #7d67d6, #6f8fee 50%, #a9dcef); box-shadow: 0 2px 5px rgba(9,30,66,.16); }
.upgrade { display: flex; height: 100%; align-items: center; justify-content: center; gap: 5px; border-radius: 20px; background: #fff; font-size: 14.300px; color: #0c66e4; font-weight: 500; }
.upgrade svg { width: 18px; height: 18px; }
.side-scroll { height: 501px; margin-top: 20px; display: flex; }
.side-nav { width: 279px; padding: 0 10px; position: relative; border-bottom: 0; }
.side-nav::after { content: ""; display: block; width: 259px; height: 2px; background: #dfe1e6; margin-top: 13px; }
.side-nav h4 { font-size: 13.500px; font-weight: 700; color: #2c3e5d; line-height: 20px; padding: 16px 0 0 23px; }
.side-nav h4.h-dev { padding-top: 15px; line-height: 20px; }
.sn { display: flex; align-items: center; height: 50px; margin: 0 2px; font-size: 16.500px; color: #44546f; padding-left: 24px; border-radius: 7px; }
.sn svg { width: 23px; height: 23px; margin-right: 20px; }
.sn-on { background: #e9f2ff; color: #0c66e4; margin-top: 0; box-shadow: inset 0 0 0 0 #0c66e4; position: relative; }
.sn-on::before { content: ""; position: absolute; left: 0; top: 15px; width: 5px; height: 20px; background: #0c66e4; border-radius: 0 3px 3px 0; }
.side-nav h4:first-child + .sn { margin-top: 7px; }
.sn-cal { color: #2c3e5d; }
.sn em { font-style: normal; font-size: 13.500px; font-weight: 700; color: #403294; background: #f3f0ff; border-radius: 4px; padding: 0 6px; margin-left: 5px; line-height: 19px; }
.sn-add { margin-top: 10px; font-size: 16.500px; }
.sb { width: 21px; flex: none; background: #f1f1f1; display: flex; flex-direction: column; align-items: center; position: relative; }
.sb b { display: block; width: 17px; background: #c1c1c1; }
.sb i { display: block; width: 0; height: 0; border-left: 5px solid transparent; border-right: 5px solid transparent; flex: none; }
.ar-up { border-bottom: 5px solid #505050; }
.ar-dn { border-top: 5px solid #a3a3a3; }
.sb-side .ar-up { border-bottom-color: #a3a3a3; margin-top: 9px; }
.sb-side .ar-dn { border-top-color: #505050; margin: auto 0 9px; }
.sb-side { width: 20px; }
.sb-side b { margin-top: 8px; height: 314px; }
.side-foot { display: flex; flex-direction: column; align-items: center; width: 299px; font-size: 14px; color: #44546f; padding-top: 10px; line-height: 22px; }
.side-foot a { color: #253858; margin-top: 13px; font-weight: 500; }

/* main */
.main { width: 1067px; flex: none; display: flex; flex-direction: column; }
.main-head { padding: 33px 50px 0 47px; height: 190px; }
.crumbs { display: flex; gap: 11px; font-size: 16.500px; color: #44546f; line-height: 26px; }
.crumbs .slash { margin: 0; }
.title-row { display: flex; align-items: center; height: 48px; margin-top: -2px; }
h1 { font-size: 28px; font-weight: 500; color: #172b4d; line-height: 48px; }
.title-acts { margin: -2px 0 0 auto; display: flex; align-items: center; }
.act { width: 24px; height: 24px; }
.act2 { width: 22px; height: 22px; margin-left: 27px; }
.more-btn { width: 40px; height: 40px; margin-left: 20px; background: #f1f2f4; border-radius: 4px; display: flex; align-items: center; justify-content: center; gap: 3.500px; }
.more-btn i, .row-more i { width: 5.500px; height: 5.500px; border-radius: 50%; background: #172b4d; }
.filters { display: flex; align-items: center; margin-top: 15px; height: 50px; }
.fsearch { width: 149px; height: 50px; border: 1.500px solid #8590a2; border-radius: 3px; display: flex; align-items: center; justify-content: flex-end; padding-right: 10px; color: #253858; }
.avs { display: flex; margin-left: 21px; }
.a40 { width: 40px; height: 40px; font-size: 18px; margin-right: -3px; }
.c-mk { background: #de350b; color: #fff; }
.c-sj { background: #00a3bf; color: #172b4d; }
.c-oa { background: #ff991f; color: #172b4d; }
.c-am { background: #00875a; color: #fff; }
.c-plus { background: #f1f2f4; color: #172b4d; font-size: 16px; font-weight: 400; }
.avs .ava:nth-child(1) { z-index: 3; position: relative; }
.avs .ava:nth-child(2) { z-index: 2; position: relative; }
.avs .ava:nth-child(3) { z-index: 1; position: relative; }
.addp { width: 40px; height: 40px; margin-left: 12px; border-radius: 50%; background: #e6e8ec; display: flex; align-items: center; justify-content: center; }
.addp svg { width: 24px; height: 24px; }
.morefl { display: flex; align-items: center; margin-left: 24px; font-size: 16.500px; font-weight: 500; gap: 14px; }
.morefl svg { width: 16px; height: 16px; }
.btn { display: flex; align-items: center; height: 40px; background: #f1f2f4; border-radius: 4px; font-size: 16.500px; font-weight: 500; }
.btn svg { width: 24px; height: 24px; }
.btn-ins { margin-left: auto; width: 122px; padding-left: 12px; gap: 9px; }
.btn-view { margin-left: 10px; width: 166px; padding-left: 13px; gap: 9px; }
.main-body { flex: 1; display: flex; min-height: 0; }
.list-col { flex: 1; display: flex; flex-direction: column; position: relative; }
.bulkbar { height: 60px; display: flex; align-items: center; padding: 0 0 10px 75px; box-shadow: 0 4px 4px -4px rgba(9,30,66,.06); position: relative; z-index: 1; background: #fff; }
.bulk-cb { width: 16px; height: 16px; background: #f1f2f4; border-radius: 3px; position: relative; }
.bulk-cb::after { content: ""; position: absolute; left: 3px; right: 3px; top: 7px; height: 2px; background: #a5adba; }
.bulk-c { width: 16px; height: 16px; margin-left: 14px; color: #a5adba; }
.bulkbar strong { margin-left: 23px; font-size: 16.500px; font-weight: 500; }
.edit { margin-left: 15px; width: 61px; height: 40px; background: #f7f8f9; border-radius: 4px; color: #a5adba; font-size: 16.500px; font-weight: 500; display: flex; align-items: center; justify-content: center; }
.list { margin: 0 50px 0 57px; height: 419.500px; overflow: hidden; border-left: 1.500px solid #e9ebef; border-right: 1.500px solid #e9ebef; border-bottom: 1.500px solid #e4e7ee; flex: none; }
.row { height: 50px; border-bottom: 1.500px solid #ebecf0; }
.row-cut { margin-top: -32px; }
.row-sel { background: #f4f8fe; border-bottom-color: #e4e9f2; }
.row:last-child { border-bottom: 0; }
.cells { height: 100%; display: flex; align-items: center; padding: 1px 0 0 17px; opacity: .5; }
.cb { width: 16px; height: 16px; background: #f1f2f4; border-radius: 3px; position: relative; }
.cb-on::after { content: ""; position: absolute; left: 4px; top: 3px; width: 8px; height: 5px; border-left: 2px solid #8993a4; border-bottom: 2px solid #8993a4; transform: rotate(-45deg); }
.ti { width: 17px; height: 17px; margin-left: 9px; }
.txt { margin-left: 6px; width: 607px; font-size: 16.400px; color: #44546f; white-space: nowrap; }
.loz { width: 68px; height: 21px; background: #f1f2f4; border-radius: 3px; color: #44546f; font-size: 14px; font-weight: 600; display: flex; align-items: center; padding-left: 5px; white-space: nowrap; }
.loz svg { width: 15px; height: 15px; margin-left: 1px; }
.dash { width: 21px; height: 21px; margin-left: 84px; border-radius: 50%; background: #f1f2f4; font-size: 13px; display: flex; align-items: center; justify-content: center; color: #44546f; }
.a30 { width: 30px; height: 30px; margin-left: 10px; font-size: 14px; margin-top: -1px; }
.row-more { width: 40px; height: 40px; margin: -2px 0 0 7px; background: #e3e8f2; border-radius: 4px; display: flex; align-items: center; justify-content: center; gap: 3.500px; }
.create-issue { display: flex; align-items: center; gap: 8px; margin: 14.500px 0 0 69px; font-size: 16.500px; color: #5e6c84; line-height: 22px; }
.create-issue svg { width: 15px; height: 15px; }
.quick { position: absolute; left: 835px; top: 529px; width: 202px; height: 50px; border-radius: 25px; background: #6554c0; color: #fff; display: flex; align-items: center; padding: 3px 0 0 21px; box-shadow: 0 8px 14px rgba(9,30,66,.2); font-size: 18.500px; font-weight: 600; }
.quick > svg { width: 18px; height: 22px; margin-top: -3px; }
.quick > span:nth-child(2) { margin-left: 11px; }
.q-x { position: absolute; right: 12px; top: 8px; width: 34px; height: 34px; border-radius: 50%; background: #8270db; box-shadow: 0 0 0 4px #5e4db2; display: flex; align-items: center; justify-content: center; }
.q-x svg { width: 12px; height: 12px; }
.sb-main .ar-up { margin-top: 9px; }
.sb-main b { margin-top: 138px; height: 434px; }
.sb-main .ar-dn { margin: auto 0 9px; }

/* panel */
.panel { width: 529px; flex: none; padding: 0 20px 0 32px; }
.p-head { display: flex; align-items: center; height: 40px; margin-top: 28px; }
.p-head h2 { font-size: 28px; font-weight: 500; white-space: nowrap; }
.p-div { width: 1px; height: 26px; background: #dfe1e6; margin: 0 14.500px; }
.p-count { font-size: 28px; color: #44546f; white-space: nowrap; }
.p-help { width: 30px; height: 30px; margin-left: 12.500px; }
.p-desc { font-size: 16.500px; color: #253858; line-height: 24px; margin-top: 19px; }
.find { height: 50px; margin-top: 20px; width: 477px; border: 1.500px solid #8590a2; border-radius: 3px; display: flex; align-items: center; padding-left: 10px; color: #172b4d; }
.find svg { width: 26px; height: 26px; }
.find span { margin-left: 12px; font-size: 16.500px; color: #6b778c; }
.p-line { height: 1.500px; background: #8590a2; margin: 18.500px 0 0 -10px; width: 497px; }
.fields { width: 477px; height: 498px; border: 1.500px solid #dfe1e6; border-top: 0; border-radius: 0 0 4px 4px; padding: 0 15px; }
.f-clip { height: 3px; overflow: hidden; display: flex; justify-content: flex-end; align-items: flex-end; font-size: 16.500px; color: #44546f; padding-right: 2px; }
.f-lab { display: block; font-size: 14px; line-height: 20px; color: #172b4d; }
.f-first { margin-top: 25px; }
.f-b { margin-top: 18px; }
.f-c { margin-top: 21px; }
.inp { height: 50px; margin-top: 9px; background: #f1f2f4; border: 1.500px solid #e9ebee; border-radius: 3px; display: flex; align-items: center; padding: 1px 12px 0 13px; font-size: 16.500px; font-weight: 500; color: #172b4d; }
.inp > span { flex: 1; }
.inp-cal { width: 24px; height: 24px; margin-right: -1px; color: #172b4d; }
.inp-c { width: 16px; height: 16px; margin-right: 2px; color: #2c3e5d; }
.inp-focus { background: #fff; border: 2px solid #2684ff; margin-top: 9px; font-weight: 400; color: #253858; padding-left: 13px; }
.prio { width: 17px; height: 11px; margin-right: 14px; }
.f-link { display: block; text-align: right; font-size: 16.500px; line-height: 28px; color: #44546f; }
.p-acts { display: flex; justify-content: flex-end; align-items: center; width: 477px; margin-top: 31px; font-size: 16.500px; gap: 30px; font-weight: 500; }
.cancel { color: #172b4d; }
.next { width: 68px; height: 40px; background: #0052cc; border-radius: 3px; color: #fff; display: flex; align-items: center; justify-content: center; }
.sb-outer .ar-up { margin-top: 7px; }
.sb-outer b { margin-top: 108px; height: 654px; }
.sb-outer .ar-dn { margin: auto 0 9px; }

/* taskbar */
.taskbar { height: 60px; flex: none; background: #1e1f21; color: #fff; display: flex; align-items: center; font-size: 14px; position: relative; }
.weather { width: 502px; padding-left: 26px; display: flex; align-items: center; }
.w-ic { width: 38px; height: 40px; position: relative; display: block; }
.w-moon { position: absolute; left: 0; top: 14px; width: 29px; height: 23px; }
.w-badge { position: absolute; left: 13px; top: -2px; width: 20px; height: 20px; border-radius: 50%; background: #ff99a4; color: #1e1f21; font-size: 13px; line-height: 20px; text-align: center; }
.w-t { display: flex; flex-direction: column; line-height: 20px; }
.w-s { color: #c8c8c8; }
.win { width: 30px; height: 30px; }
.t-search { width: 275px; height: 40px; margin-left: 16px; border-radius: 20px; background: #3d3d3f; display: flex; align-items: center; padding-left: 14px; font-size: 16px; color: #e4e4e4; }
.t-search > svg:first-child { width: 22px; height: 22px; }
.t-search > span { margin-left: 10px; flex: 1; }
.t-art { width: 56px; height: 34px; margin-right: 7px; }
.apps-t { display: flex; margin-left: 2px; align-items: center; height: 100%; }
.slot { width: 55px; height: 52px; display: flex; align-items: center; justify-content: center; position: relative; }
.slot > svg { width: 30px; height: 32px; }
.slot-on { background: #2c2d30; border-radius: 5px; width: 49px; margin: 0 3px; }
.pre { font: 800 9px "Noto Sans", sans-serif; fill: #1c1c1c; }
.lt { font: 700 13px "Noto Sans", sans-serif; fill: #fff; }
.chrome { width: 31px; height: 31px; border-radius: 50%; background: conic-gradient(from 30deg, #ea4335 0 120deg, #34a853 120deg 240deg, #fbbc04 240deg 360deg); display: flex; align-items: center; justify-content: center; }
.chrome-c { width: 14px; height: 14px; border-radius: 50%; background: #4285f4; border: 2px solid #fff; box-sizing: content-box; }
.t-pf { position: absolute; right: 7px; top: 10px; width: 16px; height: 16px; border-radius: 50%; background: radial-gradient(circle, #5a4080, #241a3a); }
.t-pf2 { right: 1px; top: 2px; width: 20px; height: 20px; background: radial-gradient(circle, #6a3fb0, #150e28); }
.t-dot { position: absolute; bottom: 2px; left: 50%; margin-left: -3px; width: 6px; height: 6px; border-radius: 50%; background: #8c8c8c; }
.t-active { position: absolute; bottom: 1px; left: 15px; width: 19px; height: 4px; border-radius: 2px; background: #1a62ae; }
.t-badge { position: absolute; right: 6px; top: 3px; width: 18px; height: 18px; border-radius: 50%; background: #0a5ea8; font-size: 11px; line-height: 18px; text-align: center; color: #0c1c2c; }
.tray { display: flex; align-items: center; margin-left: auto; height: 100%; padding-right: 27px; }
.tr-ch { width: 16px; height: 9px; }
.tr-lang { display: flex; flex-direction: column; align-items: center; margin-left: 27px; line-height: 20px; width: 30px; }
.tr-i { width: 20px; height: 20px; }
.tr-w { margin-left: 22px; }
.tr-i + .tr-i { margin-left: 10px; }
.tr-time { display: flex; flex-direction: column; align-items: flex-end; margin-left: 18px; line-height: 20px; width: 80px; }
.tr-bell { width: 16px; height: 20px; margin-left: 11px; }
```
